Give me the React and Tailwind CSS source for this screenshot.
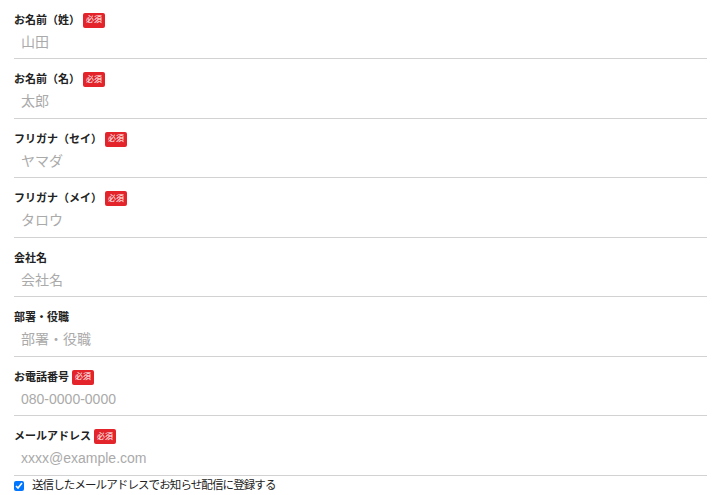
const fields = [
  { label: "お名前（姓）", placeholder: "山田", required: true },
  { label: "お名前（名）", placeholder: "太郎", required: true },
  { label: "フリガナ（セイ）", placeholder: "ヤマダ", required: true },
  { label: "フリガナ（メイ）", placeholder: "タロウ", required: true },
  { label: "会社名", placeholder: "会社名", required: false },
  { label: "部署・役職", placeholder: "部署・役職", required: false },
  { label: "お電話番号", placeholder: "080-0000-0000", required: true },
  { label: "メールアドレス", placeholder: "xxxx@example.com", required: true },
];

const font = "font-['Liberation_Sans','Noto_Sans_CJK_JP',sans-serif]";

const Field = ({ label, placeholder, required }) => (
  <div className="h-[59.5px] flex flex-col justify-end">
    <div className="h-[16px] flex items-center gap-[3px]">
      <span className="text-[11px] font-bold text-[#222] leading-none">{label}</span>
      {required && (
        <span className="bg-[#e3242b] text-white text-[8px] leading-none px-[3px] h-[15px] flex items-center rounded-[2px]">
          必須
        </span>
      )}
    </div>
    <input
      type="text"
      placeholder={placeholder}
      className={`h-[31px] px-[7px] pb-[3px] text-[14px] text-[#333] placeholder:text-[#aaa] outline-none border-b border-[#d2d2d2] ${font}`}
    />
  </div>
);

export default function App() {
  return (
    <div className={`bg-white w-[725px] h-[495px] overflow-hidden ${font}`}>
      <div className="ml-[14px] w-[693px] -mt-[0.5px]">
        {fields.map((f) => (
          <Field key={f.label} {...f} />
        ))}
        <label className="flex items-center gap-[8px] mt-[1px] h-[18px]">
          <input type="checkbox" defaultChecked className="m-0 w-[10px] h-[10px]" />
          <span className="text-[11.5px] tracking-[-0.9px] leading-none text-[#222]">送信したメールアドレスでお知らせ配信に登録する</span>
        </label>
      </div>
    </div>
  );
}
